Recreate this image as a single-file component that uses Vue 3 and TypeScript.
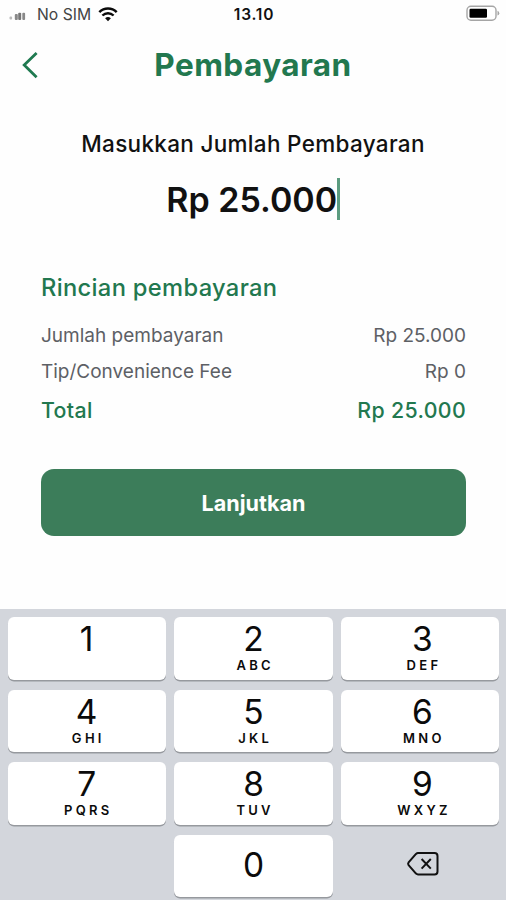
<script setup lang="ts">
interface Key {
  digit: string
  letters?: string
}

interface Row {
  label: string
  value: string
  kind: string
}

const rows: Row[] = [
  { label: 'Jumlah pembayaran', value: 'Rp 25.000', kind: 'amount' },
  { label: 'Tip/Convenience Fee', value: 'Rp 0', kind: 'fee' },
  { label: 'Total', value: 'Rp 25.000', kind: 'total' },
]

const keys: Key[] = [
  { digit: '1', letters: '' },
  { digit: '2', letters: 'ABC' },
  { digit: '3', letters: 'DEF' },
  { digit: '4', letters: 'GHI' },
  { digit: '5', letters: 'JKL' },
  { digit: '6', letters: 'MNO' },
  { digit: '7', letters: 'PQRS' },
  { digit: '8', letters: 'TUV' },
  { digit: '9', letters: 'WXYZ' },
]
</script>

<template>
  <main class="screen">
    <div class="status">
      <div class="carrier">
        <svg class="signal" width="18" height="10" viewBox="0 0 18 10">
          <rect x="0.5" y="4.5" width="2.6" height="3" rx="1" fill="#bbb" />
          <rect x="5.8" y="2" width="3" height="6" rx="1" fill="#888" />
          <rect x="9.2" y="0.8" width="3" height="7.2" rx="1" fill="#777" />
          <rect x="13.3" y="0.8" width="2.8" height="7.2" rx="1" fill="#888" />
        </svg>
        <span class="sim">No SIM</span>
        <svg class="wifi" width="20" height="15" viewBox="0 0 20 15" fill="none" stroke="#0b0b0b">
          <path d="M1.3 5.2C6.2.4 13.8.4 18.7 5.2" stroke-width="2.5" />
          <path d="M4.4 8.5C7.6 5.4 12.4 5.4 15.6 8.5" stroke-width="2.4" />
          <path d="M7.1 11.2Q10 8.8 12.9 11.2L10 14.2Z" fill="#0b0b0b" stroke="none" />
        </svg>
      </div>
      <span class="clock">13.10</span>
      <svg class="battery" width="34" height="17" viewBox="0 0 34 17">
        <rect x="1" y="1.2" width="29" height="14" rx="4" fill="#fff" stroke="#a5a5a5" stroke-width="1.4" />
        <rect x="3.5" y="3.8" width="17.5" height="9" rx="1.2" fill="#000" />
        <path d="M31.5 5.8Q33.3 6.4 33.3 8.2T31.5 10.6Z" fill="#a5a5a5" />
      </svg>
    </div>

    <header class="header">
      <svg class="back" width="18" height="28" viewBox="0 0 18 28" fill="none" stroke="#1f7a50" stroke-width="2.8">
        <path d="M15.6 2L3.2 14L15.6 26.2" />
      </svg>
      <h1 class="title">Pembayaran</h1>
    </header>

    <p class="prompt">Masukkan Jumlah Pembayaran</p>
    <div class="entry">
      <span class="entry-value">Rp 25.000</span>
      <span class="caret"></span>
    </div>

    <section class="details">
      <h2 class="details-title">Rincian pembayaran</h2>
      <div v-for="row in rows" :key="row.label" class="row" :class="row.kind">
        <span class="label">{{ row.label }}</span>
        <span class="value">{{ row.value }}</span>
      </div>
    </section>

    <button class="submit" type="button"><span class="submit-text">Lanjutkan</span></button>

    <div class="keyboard">
      <div v-for="key in keys" :key="key.digit" class="key">
        <span class="digit">{{ key.digit }}</span>
        <span class="letters">{{ key.letters }}</span>
      </div>
      <div></div>
      <div class="key zero"><span class="digit">0</span></div>
      <div class="erase">
        <svg width="34" height="26" viewBox="0 0 34 26" fill="none" stroke="#111" stroke-width="2" stroke-linejoin="round">
          <path d="M12 2H28.5Q31.5 2 31.5 5V20.5Q31.5 23.5 28.5 23.5H12Q11 23.5 10 22.6L2.6 14.2Q1.6 12.8 2.6 11.4L10 2.9Q11 2 12 2Z" />
          <path d="M15.6 8L24.8 17.6M24.8 8L15.6 17.6" />
        </svg>
      </div>
    </div>
  </main>
</template>

<style>
body {
  background: #fff;
}
</style>

<style scoped>
.screen {
  box-sizing: border-box;
  width: 506px;
  height: 900px;
  overflow: hidden;
  display: flex;
  flex-direction: column;
  background: #fefefe;
  color: #111;
  font-family: Inter, "Liberation Sans", sans-serif;
}

h1,
h2,
p {
  margin: 0;
}

.status {
  height: 29px;
  display: grid;
  grid-template-columns: 1fr auto 1fr;
  align-items: center;
  padding: 0 6px 0 9px;
}

.carrier {
  display: flex;
  align-items: center;
  margin-top: -1px;
}

.signal {
  margin-top: 5px;
}

.sim {
  margin-left: 10px;
  color: #444;
  font-size: 15.7px;
}

.wifi {
  margin-left: 7px;
}

.clock {
  margin-right: 1px;
  font-size: 15.5px;
  font-weight: 600;
  letter-spacing: 0.8px;
}

.battery {
  justify-self: end;
  margin-top: -2px;
}

.header {
  height: 72px;
  display: grid;
  grid-template-columns: 60px 1fr 60px;
  align-items: center;
}

.back {
  margin-left: 21px;
}

.title {
  color: #22784f;
  font-size: 31.5px;
  font-weight: 650;
  line-height: 40px;
  letter-spacing: 0.45px;
  text-align: center;
  white-space: nowrap;
}

.prompt {
  margin-top: 28px;
  font-size: 22.5px;
  font-weight: 500;
  line-height: 30px;
  letter-spacing: 0.31px;
  text-align: center;
}

.entry {
  display: flex;
  justify-content: center;
  margin-top: 19px;
  height: 42px;
}

.entry-value {
  font-size: 34px;
  font-weight: 600;
  line-height: 43px;
}

.caret {
  width: 3px;
  margin-left: -0.5px;
  background: #5b9c80;
}

.details {
  margin: 52px 40px 0 41px;
}

.details-title {
  color: #22784f;
  font-size: 23.7px;
  font-weight: 550;
  line-height: 31px;
  letter-spacing: 0.33px;
}

.row {
  display: flex;
  justify-content: space-between;
  height: 37px;
  line-height: 37px;
  color: #5d6065;
  font-size: 19px;
}

.amount {
  margin-top: 14px;
}

.fee {
  line-height: 36px;
}

.total {
  height: 38px;
  line-height: 39px;
  color: #22784f;
  font-size: 21.3px;
  font-weight: 550;
  letter-spacing: 0.35px;
}

.submit {
  flex: none;
  height: 67px;
  margin: 40px 40px 0 41px;
  padding: 0;
  border: 0;
  border-radius: 13px;
  background: #3c7d5a;
  color: #fff;
  font-family: inherit;
  font-size: 21.6px;
  font-weight: 700;
}

.keyboard {
  flex: none;
  box-sizing: border-box;
  height: 291px;
  margin-top: auto;
  padding: 8px 7px 0 8px;
  display: grid;
  grid-template-columns: repeat(3, 1fr);
  grid-auto-rows: 62.5px;
  gap: 10px 8px;
  background: #d3d6dc;
}

.key {
  display: flex;
  flex-direction: column;
  align-items: center;
  border-radius: 6px;
  background: #fff;
  box-shadow: 0 1.5px 0 #96999e;
  color: #0b0b0b;
}

.key:nth-child(3n) {
  box-sizing: border-box;
  padding-left: 5px;
}

.key:nth-child(3n + 1) {
  box-sizing: border-box;
  padding-right: 1px;
}

.digit {
  height: 42px;
  font-size: 33.5px;
  font-weight: 400;
  line-height: 44px;
}

.letters {
  font-size: 13px;
  font-weight: 600;
  line-height: 13px;
  letter-spacing: 3.3px;
  margin-right: -3.3px;
}

.zero {
  justify-content: center;
}

.zero .digit {
  margin-top: -4px;
}

.erase {
  display: flex;
  align-items: center;
  justify-content: center;
  padding: 0 0 3px 7px;
}
</style>
